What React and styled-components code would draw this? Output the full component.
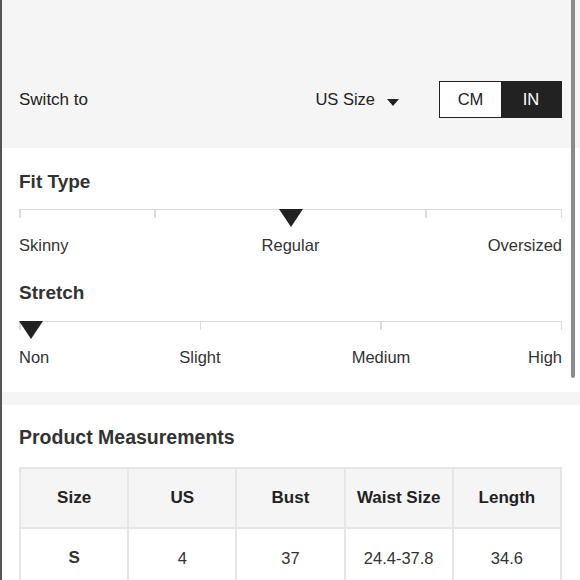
import React from "react";
import styled, { createGlobalStyle } from "styled-components";

const GlobalStyle = createGlobalStyle`
  html, body { margin: 0; padding: 0; background: #fff; }
  body { font-family: "Liberation Sans", Arial, Helvetica, sans-serif; color: #222; }
  * { box-sizing: border-box; }
`;

const Page = styled.div`
  position: relative;
  width: 580px;
  min-height: 580px;
  border-left: 2px solid #555;
  overflow: hidden;
`;

const ScrollThumb = styled.div`
  position: absolute;
  top: 0;
  right: 5px;
  width: 4px;
  height: 378px;
  border-radius: 0 0 2px 2px;
  background: #8a8a8a;
`;

const TopBar = styled.section`
  background: #f5f5f5;
  padding: 81px 18px 30px 17px;
  display: flex;
  align-items: center;
`;

const SwitchLabel = styled.span`
  flex: 1;
  font-size: 17px;
  color: #222;
`;

const Dropdown = styled.div`
  display: flex;
  align-items: center;
  gap: 12px;
  font-size: 16.5px;
  color: #222;
  margin-right: 40px;
`;

const Caret = styled.span`
  width: 0;
  height: 0;
  border-left: 6px solid transparent;
  border-right: 6px solid transparent;
  border-top: 7px solid #222;
  margin-top: 6px;
`;

const Toggle = styled.div`
  display: flex;
  height: 37px;
  border: 1px solid #222;
`;

const ToggleBtn = styled.div`
  width: ${(p) => p.$w}px;
  display: flex;
  align-items: center;
  justify-content: center;
  font-size: 16.5px;
  background: ${(p) => (p.$active ? "#222" : "#fff")};
  color: ${(p) => (p.$active ? "#fff" : "#222")};
`;

const WhiteSection = styled.section`
  background: #fff;
  padding: ${(p) => p.$pad};
  display: flex;
  flex-direction: column;
  gap: ${(p) => p.$gap || 0}px;
`;

const Divider = styled.div`
  height: 13px;
  background: #f5f5f5;
`;

const Group = styled.div`
  display: flex;
  flex-direction: column;
`;

const Heading = styled.h2`
  margin: 0;
  font-size: ${(p) => p.$size || 19}px;
  line-height: 24px;
  font-weight: bold;
  color: #333;
`;

const Track = styled.div`
  position: relative;
  height: 18px;
  margin-top: ${(p) => p.$top}px;
  border-top: 1.5px solid #dcdcdc;
  display: flex;
  justify-content: space-between;
`;

const Tick = styled.span`
  width: 1.5px;
  height: 8px;
  background: #dcdcdc;
`;

const Pointer = styled.span`
  position: absolute;
  top: -1.5px;
  width: 0;
  height: 0;
  border-left: 12px solid transparent;
  border-right: 12px solid transparent;
  border-top: 18px solid #222;
`;

const Labels = styled.div`
  margin-top: 8px;
  display: grid;
  grid-template-columns: repeat(${(p) => p.$cols}, 1fr);
  font-size: 16.5px;
  line-height: 20px;
  color: #333;
`;

const Label = styled.span`
  grid-column: ${(p) => p.$col};
  justify-self: ${(p) => p.$align};
  white-space: nowrap;
`;

const Table = styled.table`
  width: 543px;
  border-collapse: collapse;
  table-layout: fixed;
  font-size: 16.5px;
`;

const Th = styled.th`
  height: 60px;
  background: #f5f5f5;
  border: 2px solid #e6e6e6;
  font-weight: bold;
  font-size: 17px;
  color: #222;
  text-align: center;
`;

const Td = styled.td`
  height: 60px;
  border: 2px solid #e6e6e6;
  text-align: center;
  color: #333;
  font-weight: ${(p) => (p.$bold ? "bold" : "normal")};
  font-size: ${(p) => (p.$bold ? 17 : 16.5)}px;
`;

function Scale({ title, ticks, labels, value, top }) {
  const n = labels.length;
  const cols = 2 * (n - 1);
  return (
    <Group>
      <Heading>{title}</Heading>
      <Track $top={top}>
        {Array.from({ length: ticks }).map((_, i) => (
          <Tick key={i} />
        ))}
        <Pointer
          style={{
            left: `clamp(0px, calc(${value}% - 12px), calc(100% - 24px))`,
          }}
        />
      </Track>
      <Labels $cols={cols}>
        {labels.map((l, i) => {
          let col, align;
          if (i === 0) {
            col = "1 / 2";
            align = "start";
          } else if (i === n - 1) {
            col = `${cols} / ${cols + 1}`;
            align = "end";
          } else {
            col = `${2 * i} / ${2 * i + 2}`;
            align = "center";
          }
          return (
            <Label key={l} $col={col} $align={align}>
              {l}
            </Label>
          );
        })}
      </Labels>
    </Group>
  );
}

export default function App() {
  const headers = ["Size", "US", "Bust", "Waist Size", "Length"];
  const row = ["S", "4", "37", "24.4-37.8", "34.6"];
  return (
    <>
      <GlobalStyle />
      <Page>
        <TopBar>
          <SwitchLabel>Switch to</SwitchLabel>
          <Dropdown>
            US Size <Caret />
          </Dropdown>
          <Toggle>
            <ToggleBtn $w={61}>CM</ToggleBtn>
            <ToggleBtn $w={60} $active>
              IN
            </ToggleBtn>
          </Toggle>
        </TopBar>
        <WhiteSection $pad="22px 18px 25px 17px" $gap={26}>
          <Scale
            title="Fit Type"
            ticks={5}
            labels={["Skinny", "Regular", "Oversized"]}
            value={50}
            top={15}
          />
          <Scale
            title="Stretch"
            ticks={4}
            labels={["Non", "Slight", "Medium", "High"]}
            value={0}
            top={16}
          />
        </WhiteSection>
        <Divider />
        <WhiteSection $pad="20px 18px 0 17px" $gap={18}>
          <Heading $size={19.5}>Product Measurements</Heading>
          <Table>
            <thead>
              <tr>
                {headers.map((h) => (
                  <Th key={h}>{h}</Th>
                ))}
              </tr>
            </thead>
            <tbody>
              <tr>
                {row.map((c, i) => (
                  <Td key={i} $bold={i === 0}>
                    {c}
                  </Td>
                ))}
              </tr>
            </tbody>
          </Table>
        </WhiteSection>
        <ScrollThumb />
      </Page>
    </>
  );
}
